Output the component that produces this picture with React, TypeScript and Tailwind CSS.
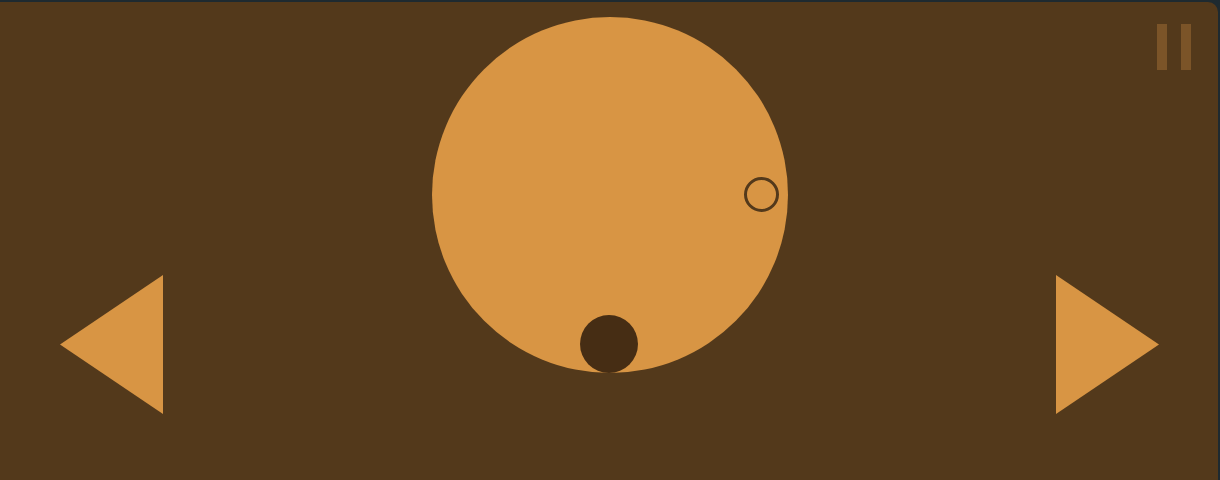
import React from "react";

// Simple dial game screen: a big dial with a marker ring, a weight, and left/right controls.
export default function App() {
  return (
    <div className="w-[1220px] h-[480px] bg-[#1e2a30] pt-[2px] pr-[2px] overflow-hidden">
      <div className="relative h-[478px] bg-[#53391b] rounded-tr-[10px] overflow-hidden">
        {/* Pause button sits over the play area */}
        <button
          aria-label="Pause"
          className="absolute top-[22px] right-[27px] flex gap-[14px]"
        >
          <span className="block w-[10px] h-[46px] bg-[#7b5428]" />
          <span className="block w-[10px] h-[46px] bg-[#7b5428]" />
        </button>

        <div className="flex items-start pl-[60px] pr-[58px]">
          <button aria-label="Left" className="mt-[273px]">
            <svg width="104" height="140" viewBox="0 0 104 140" className="block">
              <polygon points="103,0 103,139 0,69.5" fill="#d89544" />
            </svg>
          </button>

          {/* Dial */}
          <div className="flex-1 flex justify-center pt-[15px]">
            <div className="relative w-[356px] h-[356px] rounded-full bg-[#d89544]">
              <div className="absolute left-[312px] top-[160px] w-[35px] h-[35px] rounded-full border-[3px] border-[#53391b]" />
              <div className="absolute left-[148px] top-[298px] w-[58px] h-[58px] rounded-full bg-[#462d14]" />
            </div>
          </div>

          <button aria-label="Right" className="mt-[273px]">
            <svg width="104" height="140" viewBox="0 0 104 140" className="block">
              <polygon points="0,0 0,139 103,69.5" fill="#d89544" />
            </svg>
          </button>
        </div>
      </div>
    </div>
  );
}
